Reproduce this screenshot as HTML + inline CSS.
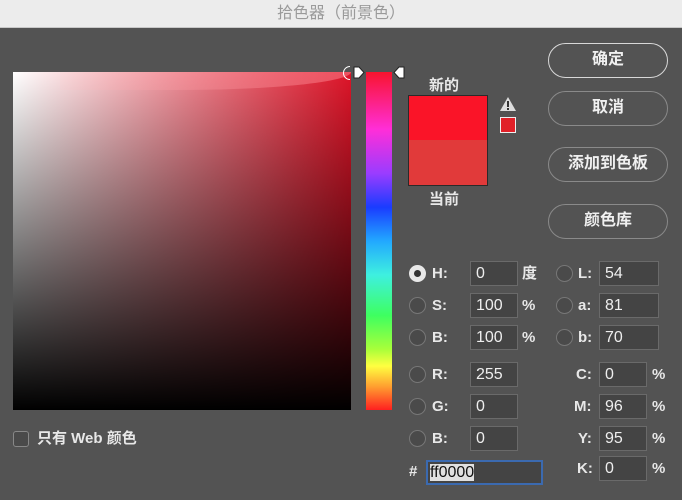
<!DOCTYPE html><html><head><meta charset="utf-8"><style>
*{margin:0;padding:0;box-sizing:border-box}
body{width:682px;height:500px;background:#535353;position:relative;overflow:hidden;font-family:"Liberation Sans","Noto Sans CJK SC",sans-serif;color:#e8e8e8}
.a{position:absolute}
.title{left:0;top:0;width:682px;height:28px;background:#ececec;border-bottom:1px solid #c8c8c8;text-align:center;line-height:28px;font-size:16px;color:#9a9a9a}
.btn{position:absolute;left:548px;width:120px;height:35px;border:1.5px solid #8a8a8a;border-radius:18px;text-align:center;line-height:32px;font-size:16px;font-weight:bold;color:#f0f0f0}
.lbl{position:absolute;font-size:15px;font-weight:bold;line-height:24px}
.inp{position:absolute;height:25px;background:#444;border:1px solid #6a6a6a;font-size:16px;line-height:23px;padding-left:5px;color:#eee}
.rad{position:absolute;width:17px;height:17px;border-radius:50%;border:1px solid #777;background:#4a4a4a}
</style></head><body>
<div class="a title">拾色器（前景色）</div>
<div class="a" style="left:13px;top:72px;width:338px;height:338px;background:linear-gradient(to right,#fff,#de1428)"></div>
<div class="a" style="left:13px;top:72px;width:338px;height:338px;background:linear-gradient(to bottom,rgba(0,0,0,0),#000)"></div>
<div class="a" style="left:60px;top:72px;width:291px;height:18px;background:linear-gradient(to right,rgba(255,200,200,.15),rgba(255,140,150,.5));border-radius:0 0 60% 0/0 0 100% 0"></div>
<div class="a" style="left:343px;top:66px;width:14px;height:14px;border:1.5px solid #fff;border-radius:50%;clip-path:inset(0 50% 0 0)"></div>
<div class="a" style="left:366px;top:72px;width:26px;height:338px;background:linear-gradient(to bottom,#f8142e 0%,#ff2ed8 17%,#9a3cff 30%,#1a3cff 40%,#22a8ff 50%,#3ef0e0 60%,#3eff60 72%,#a8ff3a 82%,#ffff40 87%,#ffa030 93%,#ff2020 100%)"></div>
<svg class="a" style="left:353px;top:66px" width="12" height="13"><path d="M1 1h5l5 5.5-5 5.5H1z" fill="#fff" stroke="#222"/></svg>
<svg class="a" style="left:393px;top:66px" width="12" height="13"><path d="M11 1H6L1 6.5 6 12h5z" fill="#fff" stroke="#222"/></svg>
<div class="lbl" style="left:429px;top:74px;font-size:15px">新的</div>
<div class="a" style="left:408px;top:95px;width:80px;height:91px;border:1px solid #2a2a2a;background:#fa1428"></div>
<div class="a" style="left:409px;top:140px;width:78px;height:45px;background:#e13a3a"></div>
<div class="lbl" style="left:429px;top:188px">当前</div>
<svg class="a" style="left:499px;top:96px" width="18" height="16"><path d="M9 1L17 15H1z" fill="#ddd"/><rect x="8" y="5" width="2" height="6" fill="#333"/><rect x="8" y="12" width="2" height="2" fill="#333"/></svg>
<div class="a" style="left:500px;top:117px;width:16px;height:16px;border:1.5px solid #eee;background:#e12028"></div>
<div class="btn" style="top:43px;border-color:#d8d8d8">确定</div>
<div class="btn" style="top:91px">取消</div>
<div class="btn" style="top:147px">添加到色板</div>
<div class="btn" style="top:204px">颜色库</div>

<div class="rad" style="left:409px;top:265px;background:#e8e8e8;border-color:#e8e8e8"></div><div class="a" style="left:414px;top:270px;width:7px;height:7px;border-radius:50%;background:#333"></div>
<div class="rad" style="left:409px;top:297px"></div>
<div class="rad" style="left:409px;top:329px"></div>
<div class="rad" style="left:409px;top:366px"></div>
<div class="rad" style="left:409px;top:398px"></div>
<div class="rad" style="left:409px;top:430px"></div>
<div class="rad" style="left:556px;top:265px"></div>
<div class="rad" style="left:556px;top:297px"></div>
<div class="rad" style="left:556px;top:329px"></div>

<div class="lbl" style="left:432px;top:262px">H:</div>
<div class="lbl" style="left:432px;top:294px">S:</div>
<div class="lbl" style="left:432px;top:326px">B:</div>
<div class="lbl" style="left:432px;top:363px">R:</div>
<div class="lbl" style="left:432px;top:395px">G:</div>
<div class="lbl" style="left:432px;top:427px">B:</div>
<div class="lbl" style="left:409px;top:460px">#</div>
<div class="inp" style="left:470px;top:261px;width:48px">0</div>
<div class="inp" style="left:470px;top:293px;width:48px">100</div>
<div class="inp" style="left:470px;top:325px;width:48px">100</div>
<div class="inp" style="left:470px;top:362px;width:48px">255</div>
<div class="inp" style="left:470px;top:394px;width:48px">0</div>
<div class="inp" style="left:470px;top:426px;width:48px">0</div>
<div class="inp" style="left:426px;top:460px;width:117px;border:2px solid #3b6ab0;padding-left:2px;line-height:21px"><span style="background:#e0e0e0;color:#111">ff0000</span></div>
<div class="lbl" style="left:522px;top:262px">度</div>
<div class="lbl" style="left:522px;top:294px">%</div>
<div class="lbl" style="left:522px;top:326px">%</div>

<div class="lbl" style="left:578px;top:262px">L:</div>
<div class="lbl" style="left:578px;top:294px">a:</div>
<div class="lbl" style="left:578px;top:326px">b:</div>
<div class="lbl" style="left:576px;top:363px">C:</div>
<div class="lbl" style="left:574px;top:395px">M:</div>
<div class="lbl" style="left:578px;top:427px">Y:</div>
<div class="lbl" style="left:577px;top:457px">K:</div>
<div class="inp" style="left:599px;top:261px;width:60px">54</div>
<div class="inp" style="left:599px;top:293px;width:60px">81</div>
<div class="inp" style="left:599px;top:325px;width:60px">70</div>
<div class="inp" style="left:599px;top:362px;width:48px">0</div>
<div class="inp" style="left:599px;top:394px;width:48px">96</div>
<div class="inp" style="left:599px;top:426px;width:48px">95</div>
<div class="inp" style="left:599px;top:456px;width:48px">0</div>
<div class="lbl" style="left:652px;top:363px">%</div>
<div class="lbl" style="left:652px;top:395px">%</div>
<div class="lbl" style="left:652px;top:427px">%</div>
<div class="lbl" style="left:652px;top:457px">%</div>

<div class="a" style="left:13px;top:431px;width:16px;height:16px;border:1px solid #888;border-radius:3px;background:#4a4a4a"></div>
<div class="lbl" style="left:37px;top:427px">只有 Web 颜色</div>
</body></html>
